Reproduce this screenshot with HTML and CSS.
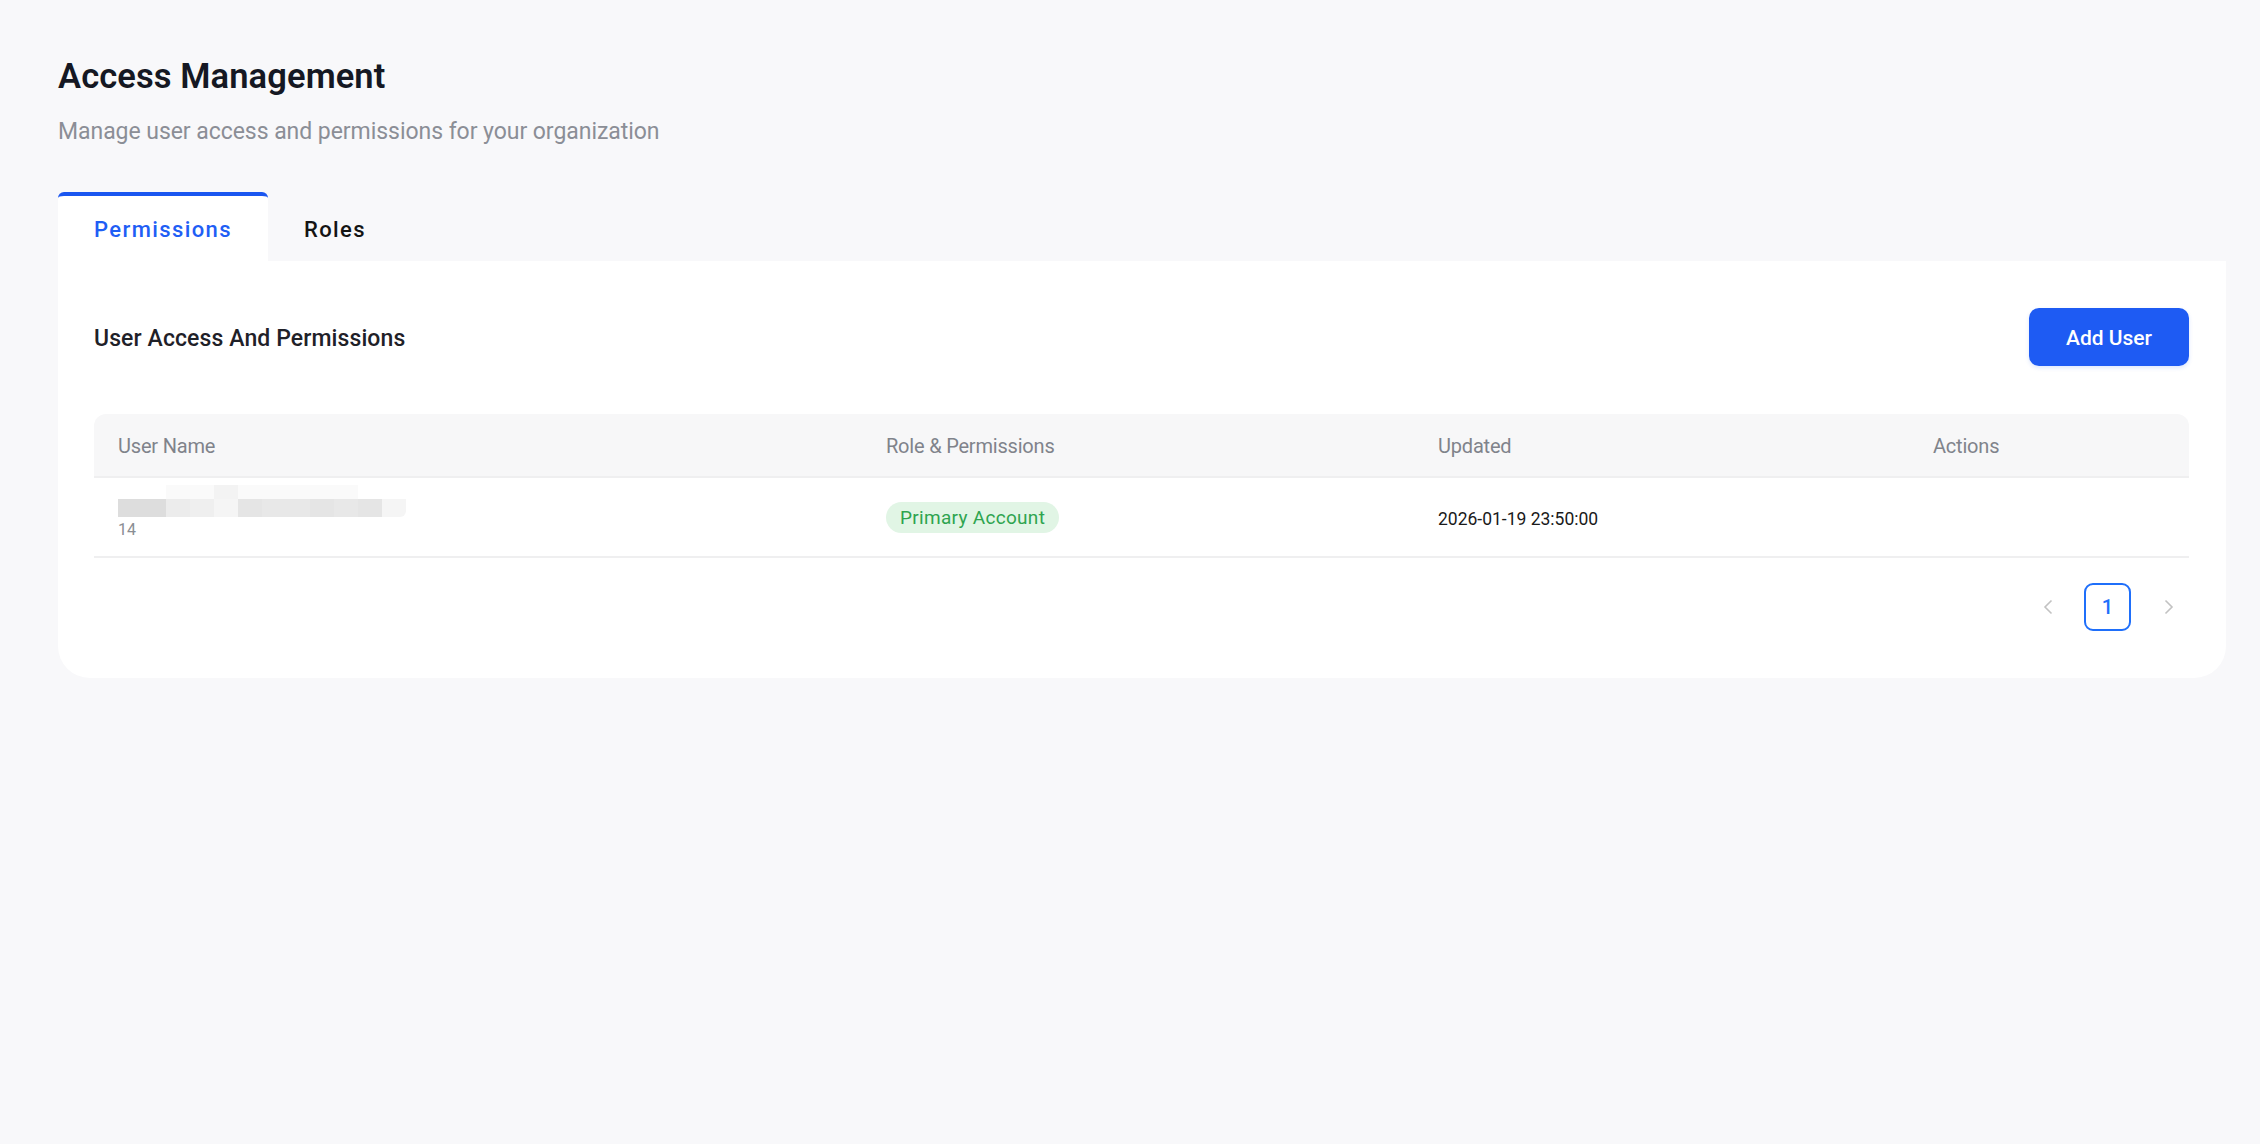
FILE: index.html
```html
<!DOCTYPE html>
<html lang="en">
<head>
    <meta charset="UTF-8">
    <meta name="viewport" content="width=device-width, initial-scale=1.0">
    <title>Access Management</title>
    <link rel="stylesheet" href="styles.css">
</head>
<body>

<div class="page">
    <h1>Access Management</h1>
    <p class="subtitle">Manage user access and permissions for your organization</p>

    <!-- Tabs -->
    <div class="tabs">
        <div class="tab active">Permissions</div>
        <div class="tab">Roles</div>
    </div>

    <div class="card">
        <div class="card-header">
            <h2>User Access And Permissions</h2>
            <button class="btn-primary">Add User</button>
        </div>

        <div class="table">
            <div class="table-row table-head">
                <div class="cell">User Name</div>
                <div class="cell">Role &amp; Permissions</div>
                <div class="cell">Updated</div>
                <div class="cell">Actions</div>
            </div>
            <div class="table-row">
                <div class="cell user-cell">
                    <!-- pixelated user name -->
                    <div class="blur">
                        <div class="blur-row top">
                            <span class="px w2"></span>
                            <span class="px s1"></span>
                            <span class="px s1"></span>
                            <span class="px s2"></span>
                            <span class="px s1"></span>
                            <span class="px s1"></span>
                            <span class="px s1"></span>
                            <span class="px s1"></span>
                            <span class="px s1"></span>
                            <span class="px"></span>
                            <span class="px"></span>
                        </div>
                        <div class="blur-row">
                            <span class="px w2 d1"></span>
                            <span class="px d4"></span>
                            <span class="px d5"></span>
                            <span class="px d6"></span>
                            <span class="px d2"></span>
                            <span class="px d3"></span>
                            <span class="px d3"></span>
                            <span class="px d2"></span>
                            <span class="px d3"></span>
                            <span class="px d2"></span>
                            <span class="px d6 last"></span>
                        </div>
                    </div>
                    <div class="user-id">14</div>
                </div>
                <div class="cell"><span class="badge">Primary Account</span></div>
                <div class="cell date">2026-01-19 23:50:00</div>
                <div class="cell"></div>
            </div>
        </div>

        <div class="pagination">
            <span class="page-arrow">
                <svg width="10" height="16" viewBox="0 0 10 16"><polyline points="8.5,1.5 2,8 8.5,14.5" fill="none" stroke="#c2c2c2" stroke-width="1.6"/></svg>
            </span>
            <span class="page-num">1</span>
            <span class="page-arrow next">
                <svg width="10" height="16" viewBox="0 0 10 16"><polyline points="1.5,1.5 8,8 1.5,14.5" fill="none" stroke="#c2c2c2" stroke-width="1.6"/></svg>
            </span>
        </div>
    </div>
</div>

</body>
</html>
```

FILE: styles.css
```css
body {
    margin: 0;
    background-color: #f8f8fa;
    font-family: Roboto, "Noto Sans", Arial, sans-serif;
    color: #15171c;
}
.page {
    padding: 56px 34px 0 58px;
}
h1 {
    margin: 0;
    font-size: 34.5px;
    line-height: 40px;
    font-weight: 600;
    letter-spacing: 0.1px;
    color: #151823;
}
.subtitle {
    margin: 21px 0 0;
    font-size: 23px;
    line-height: 30px;
    letter-spacing: -0.05px;
    color: #8b8e96;
}
.tabs {
    display: flex;
    margin-top: 45px;
}
.tab {
    height: 69px;
    padding: 1px 36px 0;
    box-sizing: border-box;
    display: flex;
    align-items: center;
    border-top: 4px solid transparent;
    font-size: 22px;
    font-weight: 500;
    letter-spacing: 1.4px;
    color: #141414;
}
.tab.active {
    background-color: #fff;
    border-top-color: #1a56f0;
    border-radius: 6px 6px 0 0;
    color: #1f5ef5;
}
.card {
    background-color: #fff;
    border-radius: 0 0 32px 32px;
    padding: 47px 37px 47px 36px;
}
.card-header {
    display: flex;
    align-items: center;
    justify-content: space-between;
}
.card-header h2 {
    margin: 0;
    padding-top: 3px;
    font-size: 23px;
    font-weight: 500;
    letter-spacing: 0.1px;
    color: #1f2128;
}
.btn-primary {
    width: 160px;
    height: 58px;
    padding-top: 3px;
    border: none;
    border-radius: 10px;
    background-color: #1e5bf3;
    color: #fff;
    font-family: inherit;
    font-size: 21px;
    font-weight: 500;
    box-shadow: 0 2px 4px rgba(30, 91, 243, 0.15);
    cursor: pointer;
}
.table {
    margin-top: 48px;
}
.table-row {
    display: grid;
    grid-template-columns: 768px 552px 495px 1fr;
    align-items: center;
    height: 78px;
    border-bottom: 2px solid #efeff0;
}
.table-head {
    height: 64px;
    padding-top: 2px;
    box-sizing: border-box;
    background-color: #f7f7f8;
    border-radius: 12px 12px 0 0;
}
.cell {
    padding-left: 24px;
    font-size: 20px;
    color: #80838b;
}
.table-head .cell {
    letter-spacing: -0.2px;
}
.user-cell {
    padding-bottom: 11px;
}
.blur-row {
    display: flex;
    height: 14px;
}
.blur-row + .blur-row {
    height: 18px;
}
.px {
    width: 24px;
    background-color: #fff;
}
.px.w2 { width: 48px; }
.px.s1 { background-color: #fafafa; }
.px.s2 { background-color: #f3f3f3; }
.px.d1 { background-color: #dddddd; }
.px.d2 { background-color: #e5e5e5; }
.px.d3 { background-color: #e8e8e8; }
.px.d4 { background-color: #ececec; }
.px.d5 { background-color: #efefef; }
.px.d6 { background-color: #f5f5f5; }
.px.last { border-radius: 0 0 6px 0; }
.user-id {
    margin-top: 4px;
    font-size: 16px;
    line-height: 17px;
    color: #8a8d93;
}
.badge {
    display: inline-block;
    height: 31px;
    line-height: 32px;
    padding: 0 14px;
    border-radius: 16px;
    background-color: #e1f5e5;
    color: #2ea44f;
    font-size: 19px;
    letter-spacing: 0.3px;
}
.date {
    padding-top: 3px;
    font-size: 17.5px;
    color: #1a1a1a;
}
.pagination {
    display: flex;
    justify-content: flex-end;
    align-items: center;
    gap: 18px;
    margin-top: 25px;
}
.page-arrow {
    width: 36px;
    display: flex;
    justify-content: center;
}
.page-arrow.next {
    width: 40px;
}
.page-num {
    width: 43px;
    height: 44px;
    border: 2px solid #1f6ffa;
    border-radius: 9px;
    display: flex;
    align-items: center;
    justify-content: center;
    font-size: 20px;
    font-weight: 500;
    color: #1f6ffa;
}
```
